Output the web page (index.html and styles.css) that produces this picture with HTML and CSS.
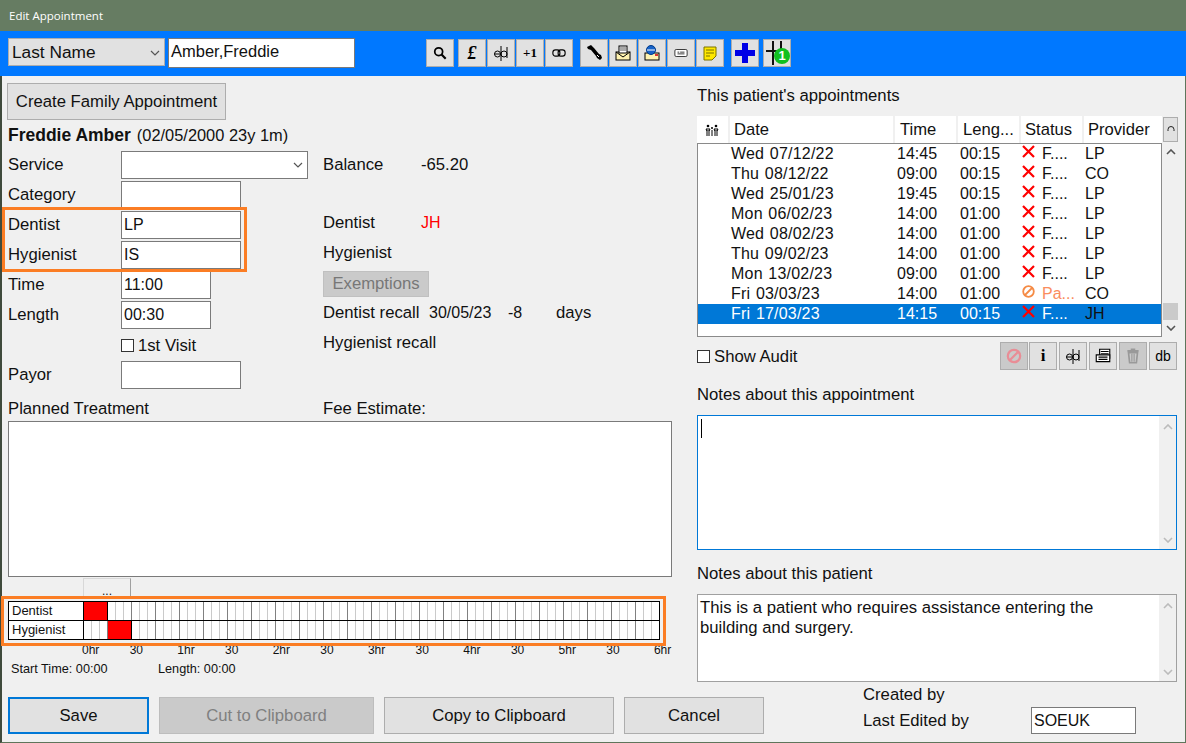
FILE: index.html
```html
<!DOCTYPE html>
<html lang="en">
<head>
<meta charset="utf-8">
<title>Edit Appointment</title>
<link rel="stylesheet" href="styles.css">
</head>
<body>
<div class="window">
  <header class="titlebar">Edit Appointment</header>
  <div class="toolbar">
    <div class="select search-type"><span>Last Name</span><svg class="chev" viewBox="0 0 10 6"><path d="M1 1l4 4 4-4"/></svg></div>
    <div class="search-box">Amber,Freddie</div>
    <div class="tool-groups">
      <div class="tool-group g1">
        <div class="tbtn"><svg class="i14" viewBox="0 0 16 16"><circle cx="6.5" cy="6.5" r="4.500" fill="none" stroke="#000" stroke-width="2"/><path d="M9.500 9.500l5 5" stroke="#000" stroke-width="2.500"/></svg></div>
      </div>
      <div class="tool-group g2">
        <div class="tbtn glyph pound">£</div>
        <div class="tbtn"><svg viewBox="0 0 18 18"><use href="#ed"/></svg></div>
        <div class="tbtn glyph plus">+1</div>
        <div class="tbtn"><svg class="i14" viewBox="0 0 16 16"><rect x="1" y="4.500" width="8" height="7" rx="3" fill="none" stroke="#000" stroke-width="1.300"/><rect x="7" y="4.500" width="8" height="7" rx="3" fill="none" stroke="#000" stroke-width="1.300"/></svg></div>
      </div>
      <div class="tool-group g3">
        <div class="tbtn"><svg viewBox="0 0 18 18"><path d="M2 3l4-2 3 3 5 6 2 1 1 3-2 2-3-2-1-2-5-6-3-1z" fill="#000"/><path d="M12 11l2 2" stroke="#fff"/></svg></div>
        <div class="tbtn"><svg viewBox="0 0 18 18"><rect x="2" y="8" width="14" height="8" fill="#fff3b0" stroke="#000"/><path d="M2 8l7 5 7-5" fill="none" stroke="#000"/><rect x="5" y="2" width="8" height="7" fill="#fff" stroke="#000"/><path d="M6 4h6M6 6h6" stroke="#555"/></svg></div>
        <div class="tbtn"><svg viewBox="0 0 18 18"><rect x="2" y="9" width="14" height="7" fill="#fff3b0" stroke="#000"/><path d="M12 10h3v2h-3z" fill="#d33"/><circle cx="8" cy="6" r="4.500" fill="#1763c9" stroke="#003a88"/><path d="M4 6h8" stroke="#fff"/></svg></div>
        <div class="tbtn"><svg class="i14" viewBox="0 0 16 16"><rect x="1" y="4" width="14" height="8" rx="1.500" fill="#fff" stroke="#222"/><path d="M4 7h2M7 7h5M4 9h8" stroke="#222"/></svg></div>
        <div class="tbtn"><svg viewBox="0 0 18 18"><path d="M3 3h12v9l-4 4H3z" fill="#ffe800" stroke="#7a7200"/><path d="M5 6h8M5 9h8M5 12h4" stroke="#7a7200"/></svg></div>
      </div>
      <div class="tool-group g4">
        <div class="tbtn large"><svg viewBox="0 0 20 20"><path d="M7 0h6v7h7v6h-7v7H7v-7H0V7h7z" fill="#0000e6"/></svg></div>
      </div>
      <div class="tool-group g5">
        <div class="tbtn badge-btn">
          <svg viewBox="0 0 26 26"><path d="M2 11h14M9 1v24M17 1v12" stroke="#111" stroke-width="2" fill="none"/></svg>
          <span class="badge">1</span>
        </div>
      </div>
    </div>
  </div>

  <svg class="defs" width="0" height="0"><defs>
    <g id="ed"><circle cx="5.500" cy="10" r="3" fill="none" stroke="#000"/><path d="M2.500 10h6" stroke="#000"/><circle cx="12" cy="10" r="3" fill="none" stroke="#000"/><path d="M15 3v11M9 2v15" stroke="#000" fill="none"/></g>
    <g id="x"><path d="M1 1l11 11M12 1l-11 11" stroke="#f00" stroke-width="2.200" fill="none"/></g>
  </defs></svg>

  <main class="content">
    <section class="left">
      <button class="btn family">Create Family Appointment</button>
      <div class="patient-line"><b>Freddie Amber</b><span>(02/05/2000 23y 1m)</span></div>
      <div class="form">
        <div class="lbl">Service</div>
        <div class="field"><div class="select service"><svg class="chev" viewBox="0 0 10 6"><path d="M1 1l4 4 4-4"/></svg></div></div>
        <div class="info first-info"><span class="col-a">Balance</span><span>-65.20</span></div>

        <div class="lbl">Category</div>
        <div class="field"><div class="input w120"></div></div>
        <div class="info"></div>

        <div class="lbl">Dentist</div>
        <div class="field"><div class="input w120">LP</div></div>
        <div class="info"><span class="col-a">Dentist</span><span class="red">JH</span></div>

        <div class="lbl">Hygienist</div>
        <div class="field"><div class="input w120">IS</div></div>
        <div class="info">Hygienist</div>

        <div class="lbl">Time</div>
        <div class="field"><div class="input w90">11:00</div></div>
        <div class="info"><div class="btn exempt">Exemptions</div></div>

        <div class="lbl">Length</div>
        <div class="field"><div class="input w90">00:30</div></div>
        <div class="info"><span class="recall-a">Dentist recall</span><span class="recall-b">30/05/23</span><span class="recall-c">-8</span><span>days</span></div>

        <div class="lbl"></div>
        <div class="field"><label class="check"><span class="box"></span>1st Visit</label></div>
        <div class="info">Hygienist recall</div>

        <div class="lbl">Payor</div>
        <div class="field"><div class="input w120"></div></div>
        <div class="info"></div>
      </div>
      <div class="plan-head"><span class="plan-a">Planned Treatment</span><span>Fee Estimate:</span></div>
      <div class="plan-box"></div>
      <div class="tab-btn">...</div>
      <div class="chart">
        <div class="chart-row"><div class="chart-name">Dentist</div><div class="slots"><i class="busy first"></i></div></div>
        <div class="chart-row"><div class="chart-name">Hygienist</div><div class="slots"><i class="busy second"></i></div></div>
      </div>
      <div class="axis"><span>0hr</span><span>30</span><span>1hr</span><span>30</span><span>2hr</span><span>30</span><span>3hr</span><span>30</span><span>4hr</span><span>30</span><span>5hr</span><span>30</span><span>6hr</span></div>
      <div class="times"><span class="start">Start Time: 00:00</span><span>Length: 00:00</span></div>
    </section>

    <section class="right">
      <div class="r-title">This patient's appointments</div>
      <div class="list-wrap">
        <div class="list">
          <div class="row head"><span class="c0"><svg viewBox="0 0 14 12" width="14" height="12"><circle cx="3" cy="2" r="1.300"/><circle cx="7" cy="4" r="1"/><circle cx="11" cy="2" r="1.300"/><path d="M2 4v8M4 4v8M7 6v6M10 4v8M12 4v8M1 5l1 2M5 5l-1 2M9 5l1 2M13 5l-1 2" stroke="#000" fill="none"/></svg></span><span class="c1 hc">Date</span><span class="c2 hc">Time</span><span class="c3 hc">Leng...</span><span class="c4 hc">Status</span><span class="c5 hc">Provider</span></div>
          <div class="row"><span class="c0"></span><span class="c1">Wed 07/12/22</span><span class="c2">14:45</span><span class="c3">00:15</span><span class="c4"><svg viewBox="0 0 13 13" class="st"><use href="#x"/></svg>F....</span><span class="c5">LP</span></div>
          <div class="row"><span class="c0"></span><span class="c1">Thu 08/12/22</span><span class="c2">09:00</span><span class="c3">00:15</span><span class="c4"><svg viewBox="0 0 13 13" class="st"><use href="#x"/></svg>F....</span><span class="c5">CO</span></div>
          <div class="row"><span class="c0"></span><span class="c1">Wed 25/01/23</span><span class="c2">19:45</span><span class="c3">00:15</span><span class="c4"><svg viewBox="0 0 13 13" class="st"><use href="#x"/></svg>F....</span><span class="c5">LP</span></div>
          <div class="row"><span class="c0"></span><span class="c1">Mon 06/02/23</span><span class="c2">14:00</span><span class="c3">01:00</span><span class="c4"><svg viewBox="0 0 13 13" class="st"><use href="#x"/></svg>F....</span><span class="c5">LP</span></div>
          <div class="row"><span class="c0"></span><span class="c1">Wed 08/02/23</span><span class="c2">14:00</span><span class="c3">01:00</span><span class="c4"><svg viewBox="0 0 13 13" class="st"><use href="#x"/></svg>F....</span><span class="c5">LP</span></div>
          <div class="row"><span class="c0"></span><span class="c1">Thu 09/02/23</span><span class="c2">14:00</span><span class="c3">01:00</span><span class="c4"><svg viewBox="0 0 13 13" class="st"><use href="#x"/></svg>F....</span><span class="c5">LP</span></div>
          <div class="row"><span class="c0"></span><span class="c1">Mon 13/02/23</span><span class="c2">09:00</span><span class="c3">01:00</span><span class="c4"><svg viewBox="0 0 13 13" class="st"><use href="#x"/></svg>F....</span><span class="c5">LP</span></div>
          <div class="row"><span class="c0"></span><span class="c1">Fri 03/03/23</span><span class="c2">14:00</span><span class="c3">01:00</span><span class="c4 pa"><svg viewBox="0 0 13 13" class="st"><circle cx="6.500" cy="6.500" r="5.300" fill="none" stroke="#f58b45" stroke-width="1.800"/><path d="M3 10l7-7" stroke="#f58b45" stroke-width="1.800"/></svg>Pa...</span><span class="c5">CO</span></div>
          <div class="row sel"><span class="c0"></span><span class="c1">Fri 17/03/23</span><span class="c2">14:15</span><span class="c3">00:15</span><span class="c4"><svg viewBox="0 0 13 13" class="st"><use href="#x"/></svg>F....</span><span class="c5 dark">JH</span></div>
        </div>
        <div class="list-bar">
          <div class="refresh"><svg viewBox="0 0 10 10"><path d="M2 6V4.500a3 3 0 0 1 6 0V6" fill="none" stroke="#222"/></svg></div>
          <svg class="up" viewBox="0 0 10 6"><path d="M1 5l4-4 4 4" fill="none" stroke="#555" stroke-width="1.600"/></svg>
          <div class="grow"></div>
          <div class="thumb"></div>
          <svg class="down" viewBox="0 0 10 6"><path d="M1 1l4 4 4-4" fill="none" stroke="#555" stroke-width="1.600"/></svg>
        </div>
      </div>
      <div class="audit-row">
        <label class="check audit"><span class="box"></span>Show Audit</label>
        <div class="mini-btns">
          <div class="tbtn off"><svg viewBox="0 0 16 16"><circle cx="8" cy="8" r="5.500" fill="none" stroke="#e98d96" stroke-width="2"/><path d="M4 12l8-8" stroke="#e98d96" stroke-width="2"/></svg></div>
          <div class="tbtn glyph info-i">i</div>
          <div class="tbtn"><svg viewBox="0 0 18 18"><use href="#ed"/></svg></div>
          <div class="tbtn"><svg viewBox="0 0 16 16"><path d="M5 2h9v8H5z" fill="#fff" stroke="#000"/><path d="M2 7h12v6H2z" fill="#fff" stroke="#000"/><path d="M6 4h7M6 6h7M4 9h8M4 11h8" stroke="#000"/></svg></div>
          <div class="tbtn off"><svg viewBox="0 0 16 16"><path d="M4 5h8l-1 9H5zM3 3.500h10M6 2h4" fill="none" stroke="#999" stroke-width="1.500"/><path d="M7 6v7M9 6v7" stroke="#999"/></svg></div>
          <div class="tbtn glyph db">db</div>
        </div>
      </div>
      <div class="r-label n1">Notes about this appointment</div>
      <div class="note focus"><div class="note-text"><span class="caret"></span></div><div class="note-bar"><svg viewBox="0 0 10 6"><path d="M1 5l4-4 4 4" fill="none" stroke="#bbb" stroke-width="1.600"/></svg><svg viewBox="0 0 10 6"><path d="M1 1l4 4 4-4" fill="none" stroke="#bbb" stroke-width="1.600"/></svg></div></div>
      <div class="r-label n2">Notes about this patient</div>
      <div class="note small"><div class="note-text">This is a patient who requires assistance entering the building and surgery.</div><div class="note-bar"><svg viewBox="0 0 10 6"><path d="M1 5l4-4 4 4" fill="none" stroke="#bbb" stroke-width="1.600"/></svg><svg viewBox="0 0 10 6"><path d="M1 1l4 4 4-4" fill="none" stroke="#bbb" stroke-width="1.600"/></svg></div></div>
    </section>
  </main>

  <footer class="footer">
    <div class="btn save">Save</div>
    <div class="btn cut">Cut to Clipboard</div>
    <div class="btn copy">Copy to Clipboard</div>
    <div class="btn cancel">Cancel</div>
    <div class="edited">
      <div class="created">Created by</div>
      <div class="last"><span>Last Edited by</span><div class="input soeuk">SOEUK</div></div>
    </div>
  </footer>

  <div class="mark mark-form"></div>
  <div class="mark mark-chart"></div>
</div>
</body>
</html>
```

FILE: styles.css
```css
* { box-sizing: border-box; }
html, body { margin: 0; padding: 0; }
body { width: 1186px; height: 743px; overflow: hidden; font-family: "Liberation Sans", Arial, sans-serif; font-size: 16.7px; color: #111; }
.window { position: relative; width: 1186px; height: 743px; background: #f0f0f0; border-left: 2px solid #3f4a3c; border-right: 1px solid #5f755b; border-bottom: 1px solid #5f755b; display: flex; flex-direction: column; }
.defs { position: absolute; }
.titlebar { height: 31px; margin-left: -2px; margin-right: -1px; background: #667c62; color: #fff; font: 11.500px "Open Sans", sans-serif; line-height: 32px; padding-left: 9px; }
.toolbar { height: 45px; margin-left: -2px; margin-right: -1px; background: #0078ff; display: flex; align-items: flex-start; padding: 7px 0 0 8px; }
.select { background: #e1e1e1; border: 1px solid #adadad; display: flex; align-items: center; justify-content: space-between; padding: 0 4px 0 3px; }
.chev { width: 10px; height: 6px; margin-left: auto; }
.chev path { fill: none; stroke: #555; stroke-width: 1.200; }
.search-type { width: 157px; height: 28px; font-size: 17.300px; padding-top: 1px; }
.search-box { width: 187px; height: 30px; margin-left: 3px; background: #fff; border: 1px solid #7a7a7a; padding-left: 2px; line-height: 25px; font-size: 16.500px; }
.tool-groups { display: flex; margin: 1px 0 0 71px; }
.tool-group { display: flex; gap: 1px; }
.g2 { margin-left: 4px; }
.g3 { margin-left: 7px; }
.g4 { margin-left: 7px; }
.g5 { margin-left: 4px; }
.tbtn { position: relative; width: 28px; height: 28px; background: #e1e1e1; border: 1px solid #adadad; display: flex; align-items: center; justify-content: center; }
.tbtn svg { width: 18px; height: 18px; }
.tbtn svg.i14 { width: 14px; height: 14px; }
.tbtn.large svg { width: 20px; height: 20px; }
.tbtn.badge-btn svg { width: 26px; height: 26px; }
.badge { position: absolute; left: 10px; top: 8px; width: 16px; height: 16px; border-radius: 50%; background: #10c020; color: #fff; font-size: 13px; font-weight: bold; line-height: 16px; text-align: center; }
.tbtn.off { background: #cacaca; }
.glyph { color: #000; font-family: "Liberation Serif", serif; font-weight: bold; }
.pound { font-size: 18px; font-style: italic; }
.plus { font-size: 13px; }
.info-i { font-size: 17px; }
.db { font-family: "Liberation Sans", sans-serif; font-weight: normal; font-size: 14px; }

.content { display: grid; grid-template-columns: 695px 481px; height: 614px; }
.left { padding: 7px 0 0 6px; position: relative; }
.btn { background: #e1e1e1; border: 1px solid #adadad; display: flex; align-items: center; justify-content: center; font: inherit; color: #111; }
.family { width: 219px; height: 37px; margin-left: -1px; padding: 0; }
.patient-line { height: 30px; display: flex; align-items: center; gap: 6px; font-size: 16.400px; }
.patient-line b { font-size: 17.500px; }
.form { display: grid; grid-template-columns: 113px 202px 1fr; grid-auto-rows: 30px; }
.lbl { display: flex; align-items: center; padding-bottom: 1px; }
.field { display: flex; align-items: center; }
.info { display: flex; align-items: center; padding-bottom: 4px; }
.first-info { padding-bottom: 0; }
.col-a { width: 98px; }
.red { color: #f00; font-size: 16px; }
.input { height: 28px; background: #fff; border: 1px solid #7a7a7a; padding-left: 2px; line-height: 26px; font-size: 16px; }
.w120 { width: 120px; }
.w90 { width: 90px; }
.service { width: 187px; height: 28px; background: #fff; border-color: #7a7a7a; }
.check { display: flex; align-items: center; padding-top: 1px; }
.box { width: 13px; height: 13px; border: 1px solid #333; background: #fff; margin-right: 4px; }
.exempt { width: 106px; height: 26px; margin-top: 2px; background: #cacaca; color: #777; border-color: #c0c0c0; }
.recall-a { width: 106px; }
.recall-b { width: 79px; font-size: 16px; }
.recall-c { width: 48px; font-size: 16px; }
.plan-head { display: flex; height: 31px; padding-top: 9px; }
.plan-a { width: 315px; }
.plan-box { width: 664px; height: 156px; background: #fff; border: 1px solid #7a7a7a; }
.tab-btn { width: 48px; height: 20px; margin: 1px 0 0 75px; background: #f0f0f0; border: 1px solid #d8d8d8; border-right-color: #a0a0a0; border-bottom: 0; font-size: 12px; text-align: center; line-height: 24px; }
.chart { width: 652px; margin-top: 3px; border: 1px solid #000; background: #fff; }
.chart-row { display: flex; height: 18px; }
.chart-row + .chart-row { border-top: 1px solid #000; height: 19px; }
.chart-name { width: 75px; border-right: 1px solid #000; font-size: 13px; line-height: 17px; padding-left: 3px; flex: none; }
.slots { position: relative; flex: 1; background-image: repeating-linear-gradient(90deg, transparent 0, transparent 23px, #808080 23px, #808080 24px), repeating-linear-gradient(90deg, transparent 0, transparent 7px, #cacaca 7px, #cacaca 8px); }
.busy { position: absolute; top: 0; bottom: 0; width: 24px; background: #f00; border-right: 1px solid #000; }
.first { left: 0; }
.second { left: 24px; }
.axis { display: flex; margin: 3px 0 0 74px; font-size: 12px; height: 15px; }
.axis span { width: 47.670px; flex: none; }
.times { display: flex; font-size: 12.700px; margin: 4px 0 0 3px; }
.start { width: 147px; }

.right { padding-top: 12px; padding-left: 0; }
.r-title { height: 17px; line-height: 16px; }
.list-wrap { display: flex; margin-top: 11px; width: 480px; height: 221px; }
.list { width: 465px; border: 1px solid #8a8a8a; border-top: 0; background: #fff; }
.row { display: grid; grid-template-columns: 32px 164px 63px 63px 63px 75px; height: 20px; align-items: center; line-height: 18px; font-size: 16px; }
.head { height: 28px; background: #fff; border-bottom: 1px solid #8a8a8a; margin: 0 -1px; width: 465px; grid-template-columns: 31px 165px 63px 63px 63px 80px; font-size: 16.600px; }
.hc { height: 27px; border-left: 2px solid #f0f0f0; padding-left: 5px; line-height: 27px; }
.c0 { padding-left: 8px; display: flex; }
.c1 { padding-left: 1px; letter-spacing: 0.200px; word-spacing: 1px; }
.c2 { padding-left: 3px; }
.c3 { padding-left: 3px; }
.head .c1 { padding-left: 4px; letter-spacing: 0; }
.head .c2, .head .c3 { padding-left: 5px; }
.head .c4, .head .c5 { padding-left: 4px; }
.c4 { padding-left: 0; display: flex; align-items: center; }
.c5 { padding-left: 2px; }
.st { width: 13px; height: 13px; margin: -5px 7px 0 2px; flex: none; }
.pa { color: #fa8d5e; }
.sel { background: #0078d7; color: #fff; }
.dark { color: #111; }
.list-bar { flex: 1; margin-left: 1px; display: flex; flex-direction: column; align-items: center; width: 15px; }
.refresh { width: 15px; height: 25px; margin-top: 1px; background: #e1e1e1; border: 1px solid #adadad; display: flex; align-items: center; justify-content: center; }
.refresh svg { width: 10px; height: 10px; }
.up { width: 10px; height: 6px; margin-top: 7px; }
.grow { flex: 1; }
.thumb { width: 15px; height: 17px; background: #cacaca; }
.down { width: 10px; height: 6px; margin: 5px 0 6px; }
.audit-row { display: flex; justify-content: space-between; align-items: center; margin-top: 5px; width: 480px; height: 28px; }
.mini-btns { display: flex; gap: 2px; }
.mini-btns .tbtn:first-child { margin-right: -1px; }
.r-label { line-height: 16px; }
.n1 { margin-top: 17px; height: 28px; }
.n2 { margin-top: 16px; height: 28px; }
.note { width: 480px; background: #fff; border: 1px solid #a0a0a0; display: flex; }
.note.focus { height: 135px; border-color: #0078d7; }
.note.small { height: 88px; }
.note-text { flex: 1; padding: 3px 30px 2px 2px; line-height: 20px; }
.caret { display: block; width: 1px; height: 19px; margin-left: 1px; background: #000; }
.note-bar { width: 17px; background: #f0f0f0; display: flex; flex-direction: column; justify-content: space-between; align-items: center; padding: 8px 0 6px; }
.note-bar svg { width: 10px; height: 6px; }

.footer { flex: 1; display: flex; align-items: flex-start; padding: 7px 0 0 6px; }
.footer .btn { height: 37px; }
.footer .save { width: 141px; background: #e1e1e1; border: 2px solid #0078d7; }
.cut { width: 215px; margin-left: 10px; background: #cacaca; color: #808080; border-color: #bdbdbd; }
.copy { width: 230px; margin-left: 10px; }
.cancel { width: 140px; margin-left: 10px; }
.edited { margin: -14px 0 0 99px; }
.created { height: 24px; line-height: 24px; }
.last { display: flex; align-items: center; height: 27px; }
.last span { width: 168px; }
.soeuk { width: 105px; height: 27px; line-height: 25px; }

.mark { position: absolute; border: 3px solid #fb7d24; pointer-events: none; }
.mark-form { left: 0; top: 207px; width: 245px; height: 65px; }
.mark-chart { left: -1px; top: 596px; width: 665px; height: 50px; }
```
